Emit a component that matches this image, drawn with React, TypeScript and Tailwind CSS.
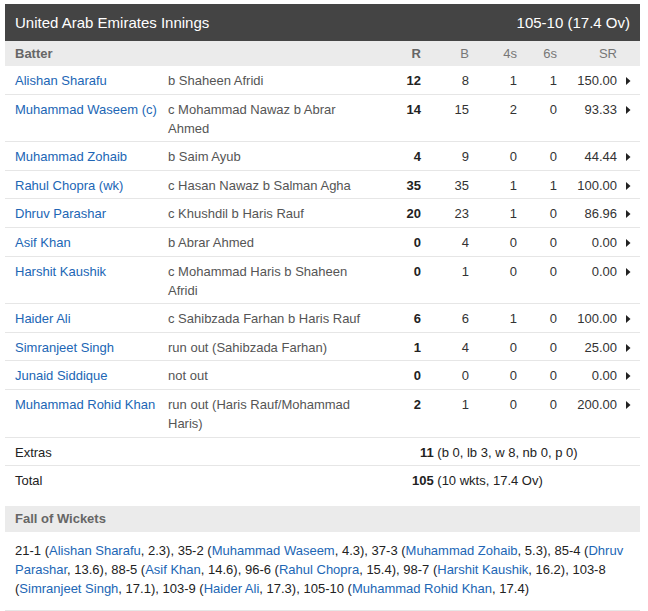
import React from 'react'

const batters = [
  { name: 'Alishan Sharafu', how: 'b Shaheen Afridi', r: 12, b: 8, f: 1, s: 1, sr: '150.00' },
  { name: 'Muhammad Waseem (c)', how: 'c Mohammad Nawaz b Abrar Ahmed', r: 14, b: 15, f: 2, s: 0, sr: '93.33' },
  { name: 'Muhammad Zohaib', how: 'b Saim Ayub', r: 4, b: 9, f: 0, s: 0, sr: '44.44' },
  { name: 'Rahul Chopra (wk)', how: 'c Hasan Nawaz b Salman Agha', r: 35, b: 35, f: 1, s: 1, sr: '100.00' },
  { name: 'Dhruv Parashar', how: 'c Khushdil b Haris Rauf', r: 20, b: 23, f: 1, s: 0, sr: '86.96' },
  { name: 'Asif Khan', how: 'b Abrar Ahmed', r: 0, b: 4, f: 0, s: 0, sr: '0.00' },
  { name: 'Harshit Kaushik', how: 'c Mohammad Haris b Shaheen Afridi', r: 0, b: 1, f: 0, s: 0, sr: '0.00' },
  { name: 'Haider Ali', how: 'c Sahibzada Farhan b Haris Rauf', r: 6, b: 6, f: 1, s: 0, sr: '100.00' },
  { name: 'Simranjeet Singh', how: 'run out (Sahibzada Farhan)', r: 1, b: 4, f: 0, s: 0, sr: '25.00' },
  { name: 'Junaid Siddique', how: 'not out', r: 0, b: 0, f: 0, s: 0, sr: '0.00' },
  { name: 'Muhammad Rohid Khan', how: 'run out (Haris Rauf/Mohammad Haris)', r: 2, b: 1, f: 0, s: 0, sr: '200.00' },
]

const wickets: [string, string, string][] = [
  ['21-1', 'Alishan Sharafu', '2.3'],
  ['35-2', 'Muhammad Waseem', '4.3'],
  ['37-3', 'Muhammad Zohaib', '5.3'],
  ['85-4', 'Dhruv Parashar', '13.6'],
  ['88-5', 'Asif Khan', '14.6'],
  ['96-6', 'Rahul Chopra', '15.4'],
  ['98-7', 'Harshit Kaushik', '16.2'],
  ['103-8', 'Simranjeet Singh', '17.1'],
  ['103-9', 'Haider Ali', '17.3'],
  ['105-10', 'Muhammad Rohid Khan', '17.4'],
]

const cols = 'grid grid-cols-[163px_213px_40px_48px_48px_40px_60px_23px]'

const Arrow = () => (
  <svg width="5" height="8" viewBox="0 0 5 8" className="mt-[6px] ml-[9px]">
    <path d="M0 0 L4.5 4 L0 8 Z" fill="#222" />
  </svg>
)

const App = () => {
  return (
    <div className="pt-[4px] pl-[5px] w-[640px] bg-white text-[13px] leading-[19px]" style={{ fontFamily: '"Liberation Sans", Arial, sans-serif' }}>
      <div className="w-[635px]">
        <div className="h-[37px] bg-[#444444] text-white text-[15px] flex items-center justify-between pl-[10px] pr-[10px]">
          <span>United Arab Emirates Innings</span>
          <span>105-10 (17.4 Ov)</span>
        </div>

        <div className={`${cols} h-[25px] items-center bg-[#ebebeb] text-[#777]`}>
          <div className="pl-[10px] font-bold text-[#666]">Batter</div>
          <div />
          <div className="text-right font-bold text-[#666]">R</div>
          <div className="text-right">B</div>
          <div className="text-right">4s</div>
          <div className="text-right">6s</div>
          <div className="text-right">SR</div>
          <div />
        </div>

        {batters.map((p) => (
          <div key={p.name} className={`${cols} border-b border-[#e6e6e6] pt-[5px] pb-[3.6px]`}>
            <div className="pl-[10px] text-[#2166b5]">{p.name}</div>
            <div className="pr-[8px] text-[#555]">{p.how}</div>
            <div className="text-right font-bold text-[#222]">{p.r}</div>
            <div className="text-right text-[#333]">{p.b}</div>
            <div className="text-right text-[#333]">{p.f}</div>
            <div className="text-right text-[#333]">{p.s}</div>
            <div className="text-right text-[#333]">{p.sr}</div>
            <div className="flex items-start"><Arrow /></div>
          </div>
        ))}

        <div className="flex border-b border-[#e6e6e6] pt-[5px] pb-[3.6px] text-[#222]">
          <div className="pl-[10px] w-[415px]">Extras</div>
          <div><span className="font-bold">11</span> (b 0, lb 3, w 8, nb 0, p 0)</div>
        </div>
        <div className="flex pt-[5px] pb-[3.6px] text-[#222]">
          <div className="pl-[10px] w-[407px]">Total</div>
          <div><span className="font-bold">105</span> (10 wkts, 17.4 Ov)</div>
        </div>

        <div className="mt-[12px] h-[26px] bg-[#ebebeb] flex items-center pl-[10px] font-bold text-[#666]">
          Fall of Wickets
        </div>
        <div className="pl-[10px] pr-[10px] pt-[9px] pb-[12px] border-b border-[#e6e6e6] text-[#222]">
          {wickets.map(([score, name, over], i) => (
            <React.Fragment key={score}>
              {score} (<span className="text-[#2166b5]">{name}</span>, {over}){i < wickets.length - 1 ? ', ' : ''}
            </React.Fragment>
          ))}
        </div>
      </div>
    </div>
  )
}

export default App
